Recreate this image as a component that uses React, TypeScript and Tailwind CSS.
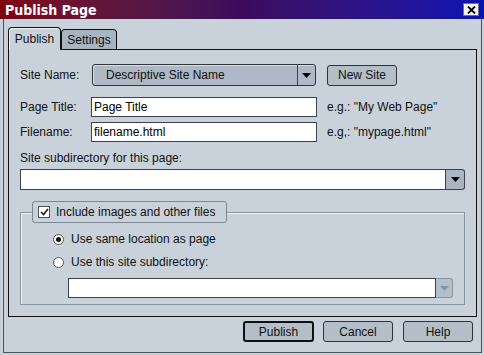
const font = { fontFamily: '"Liberation Sans", Arial, sans-serif' };

const Arrow = ({ color = "#000" }: { color?: string }) => (
  <svg width="9" height="5" viewBox="0 0 9 5">
    <path d="M0 0h9L4.5 5z" fill={color} />
  </svg>
);

const TextBox = ({ value, className }: { value?: string; className: string }) => (
  <div
    className={
      "flex items-center bg-white border border-[#3c4248] pl-[2px] text-[12px] text-black " +
      className
    }
  >
    {value}
  </div>
);

const Button = ({ label, primary }: { label: string; primary?: boolean }) => (
  <button
    className={
      "h-[21px] rounded-[3px] bg-[#b3bec9] text-[12px] text-[#111] flex items-center justify-center " +
      (primary ? "w-[71px] border-2 border-[#111]" : "w-[70px] border border-[#2c3238]")
    }
  >
    {label}
  </button>
);

const Radio = ({ checked, label }: { checked?: boolean; label: string }) => (
  <div className="flex items-center h-[16px] ml-[32px]">
    <div className="w-[11px] h-[11px] rounded-full bg-white border border-[#4c545c] flex items-center justify-center">
      {checked && <div className="w-[5px] h-[5px] rounded-full bg-[#111]" />}
    </div>
    <span className="ml-[7px] text-[12px] text-[#111]">{label}</span>
  </div>
);

export default function App() {
  return (
    <div className="w-[484px] h-[355px] bg-[#c9d2da] overflow-hidden" style={font}>
      {/* title bar */}
      <div className="h-[19px] flex items-center pl-[5px] pr-[5px] bg-gradient-to-r from-[#82000e] via-[#3c0a5e] to-[#0612b6]">
        <span
          className="text-white font-bold text-[14px] leading-none"
          style={{ fontFamily: '"DejaVu Sans Condensed", "Liberation Sans", sans-serif' }}
        >
          Publish Page
        </span>
        <div className="ml-auto w-[16px] h-[13px] bg-[#f4f4f4] border border-[#707070] flex items-center justify-center">
          <svg width="9" height="8" viewBox="0 0 9 8">
            <path d="M1 0.5L8 7.5M8 0.5L1 7.5" stroke="#000" strokeWidth="1.8" />
          </svg>
        </div>
      </div>

      {/* window frame */}
      <div className="ml-[3px] w-[479px] h-[334px] border-l border-r border-b border-[#4a525a] px-[4px] pt-[8px]">
        {/* tabs */}
        <div className="flex items-end h-[22px]">
          <div className="relative z-10 -mb-px w-[53px] h-[23px] bg-[#c9d2da] border border-b-0 border-[#111] rounded-t-[4px] shadow-[inset_1px_1px_0_#eef2f5] flex items-center justify-center pb-[1px] text-[12px] text-[#111]">
            Publish
          </div>
          <div className="w-[56px] h-[20px] bg-[#a8b4c0] border border-b-0 border-[#111] rounded-t-[4px] flex items-center justify-center text-[12px] text-[#111]">
            Settings
          </div>
        </div>

        {/* panel */}
        <div className="w-[469px] h-[268px] border border-[#111] px-[11px] pt-[14px]">
          {/* site name */}
          <div className="flex items-center h-[22px]">
            <span className="w-[72px] text-[12px] text-[#111]">Site Name:</span>
            <div className="w-[224px] h-[22px] rounded-[3px] border border-[#2e343a] bg-[#aeb9c5] flex shadow-[inset_1px_1px_0_#d8e0e6]">
              <div className="flex-1 flex items-center pl-[13px] text-[12px] text-[#111]">
                Descriptive Site Name
              </div>
              <div className="w-[18px] border-l border-[#3a4046] flex items-center justify-center">
                <Arrow />
              </div>
            </div>
            <div className="ml-[11px]">
              <Button label="New Site" />
            </div>
          </div>

          {/* page title */}
          <div className="flex items-center h-[20px] mt-[11px]">
            <span className="w-[71px] text-[12px] text-[#111]">Page Title:</span>
            <TextBox value="Page Title" className="w-[226px] h-[20px]" />
            <span className="ml-[10px] text-[12px] text-[#111]">e.g.: "My Web Page"</span>
          </div>

          {/* filename */}
          <div className="flex items-center h-[20px] mt-[5px]">
            <span className="w-[71px] text-[12px] text-[#111]">Filename:</span>
            <TextBox value="filename.html" className="w-[226px] h-[20px]" />
            <span className="ml-[10px] text-[12px] text-[#111]">e.g,: "mypage.html"</span>
          </div>

          <div className="mt-[8px] h-[16px] flex items-center text-[12px] text-[#111]">
            Site subdirectory for this page:
          </div>

          <div className="mt-[3px] flex h-[21px] w-[445px]">
            <TextBox className="flex-1 h-[21px]" />
            <div className="w-[19px] h-[21px] rounded-r-[3px] border border-l-0 border-[#3c4248] bg-[#a9b5c1] flex items-center justify-center">
              <Arrow />
            </div>
          </div>

          {/* group box */}
          <div className="mt-[22px] w-[445px] h-[93px] border border-[#8a949e] shadow-[inset_1px_1px_0_#eef2f5]">
            <div className="-mt-[12px] ml-[11px] w-[195px] h-[22px] rounded-[3px] border border-[#7c8690] bg-[#c9d2da] flex items-center pl-[5px]">
              <div className="w-[12px] h-[12px] bg-white border border-[#4c545c] flex items-center justify-center">
                <svg width="9" height="8" viewBox="0 0 9 8">
                  <path d="M1 4l2.5 2.5L8 1" stroke="#1a1e22" strokeWidth="1.6" fill="none" />
                </svg>
              </div>
              <span className="ml-[6px] text-[12px] text-[#111]">Include images and other files</span>
            </div>
            <div className="mt-[8px]">
              <Radio checked label="Use same location as page" />
            </div>
            <div className="mt-[7px]">
              <Radio label="Use this site subdirectory:" />
            </div>
            <div className="mt-[8px] ml-[47px] flex h-[20px]">
              <TextBox className="w-[368px] h-[20px]" />
              <div className="w-[17px] h-[20px] rounded-r-[3px] border border-l-0 border-[#8a949e] bg-[#b4bfca] flex items-center justify-center">
                <Arrow color="#8a94a0" />
              </div>
            </div>
          </div>
        </div>

        {/* buttons */}
        <div className="mt-[4px] flex justify-end pr-[4px]">
          <Button label="Publish" primary />
          <div className="ml-[9px]">
            <Button label="Cancel" />
          </div>
          <div className="ml-[10px]">
            <Button label="Help" />
          </div>
        </div>
      </div>
    </div>
  );
}
